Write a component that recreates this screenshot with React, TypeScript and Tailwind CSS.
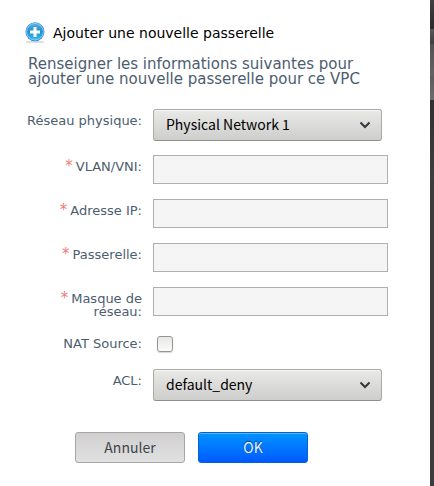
import { useId } from "react";
import type { ReactNode } from "react";

const uiFont = "font-['Noto_Sans_CJK_SC','Noto_Sans',sans-serif]";

function Row({ id, label, required, children }: { id: string; label: string; required?: boolean; children: ReactNode }) {
  return (
    <div className="flex items-start gap-[11px]">
      <label htmlFor={id} className="w-[118px] shrink-0 pt-[5px] text-right text-[13px] leading-[13px] text-[#4c5d70]">
        {required && <span className="mr-[3px] text-[15px] leading-[13px] text-[#ee7b7a]">*</span>}
        {label}
      </label>
      {children}
    </div>
  );
}

function TextRow({ label }: { label: string }) {
  const id = useId();
  return (
    <Row id={id} label={label} required>
      <input id={id} type="text" className="h-[29px] min-w-0 flex-1 border border-[#afafaf] bg-[#f5f5f5] px-2 text-sm" />
    </Row>
  );
}

function SelectRow({ label, options }: { label: string; options: string[] }) {
  const id = useId();
  return (
    <Row id={id} label={label}>
      <div className="relative mr-1.5 flex min-w-0 flex-1">
        <select
          id={id}
          className={`h-8 w-full appearance-none rounded-[3px] border border-[#aaaaa6] border-b-[#8f8e87] bg-linear-to-b from-[#e9e9e8] to-[#cececc] pr-8 pb-0.5 pl-3 text-sm text-black shadow-[inset_0_1px_0_#f6f6f6] ${uiFont}`}
        >
          {options.map((o) => (
            <option key={o}>{o}</option>
          ))}
        </select>
        <svg className="pointer-events-none absolute top-3 right-3 h-2 w-2.5" viewBox="0 0 10 8" fill="none" stroke="#33393c" strokeWidth="2">
          <path d="M0.5 1.5 5 6 9.5 1.5" />
        </svg>
      </div>
    </Row>
  );
}

function AddIcon() {
  return (
    <svg className="h-[22px] w-5 shrink-0" viewBox="0 0 20 22" aria-hidden="true">
      <defs>
        <linearGradient id="disc" x1="0" y1="0" x2="0" y2="1">
          <stop offset="0" stopColor="#58b0e0" />
          <stop offset="0.5" stopColor="#1c8fd2" />
          <stop offset="1" stopColor="#35c3f5" />
        </linearGradient>
        <linearGradient id="rim" x1="0" y1="0" x2="0" y2="1">
          <stop offset="0" stopColor="#3f8ee0" />
          <stop offset="1" stopColor="#1f74c8" />
        </linearGradient>
      </defs>
      <rect x="1" y="19" width="18" height="2" rx="1" fill="#dedede" />
      <circle cx="10" cy="9.8" r="9.5" fill="url(#rim)" />
      <circle cx="10" cy="9.8" r="8.4" fill="url(#disc)" stroke="#a5dcf6" strokeWidth="0.8" />
      <path d="M10 5v10M5 10h10" stroke="#fff" strokeWidth="3" />
    </svg>
  );
}

export default function App() {
  const natId = useId();
  return (
    <div className="flex min-h-screen bg-white font-['DejaVu_Sans',sans-serif]">
      <form className="min-w-0 flex-1 pt-[22px] pb-[23px]" onSubmit={(e) => e.preventDefault()}>
        <header className="flex items-center gap-2 pl-[25px]">
          <AddIcon />
          <h1 className="text-sm leading-5 text-black">Ajouter une nouvelle passerelle</h1>
        </header>
        <p className="mt-[13px] pr-10 pl-7 text-[15px] leading-[15px] text-[#4c5d70]">
          Renseigner les informations suivantes pour ajouter une nouvelle passerelle pour ce VPC
        </p>
        <div className="mt-[22px] pr-[42px] pl-6">
          <SelectRow label="Réseau physique:" options={["Physical Network 1"]} />
          <div className="mt-3.5 flex flex-col gap-[15px]">
            <TextRow label="VLAN/VNI:" />
            <TextRow label="Adresse IP:" />
            <TextRow label="Passerelle:" />
            <TextRow label="Masque de réseau:" />
          </div>
          <div className="mt-3.5 mb-[17px]">
            <Row id={natId} label="NAT Source:">
              <input
                id={natId}
                type="checkbox"
                className="mt-1 ml-1 size-4 appearance-none rounded-[3px] border border-[#96958f] bg-linear-to-b from-[#e8e8e8] to-[#fbfbfb] shadow-[0_1px_1px_#d8d8d8] checked:from-[#0090ff] checked:to-[#0060ff]"
              />
            </Row>
          </div>
          <SelectRow label="ACL:" options={["default_deny"]} />
        </div>
        <div className="mt-[31px] flex gap-[13px] pl-[75px]">
          <button
            type="button"
            className={`h-[31px] w-[110px] rounded-[3px] border border-[#a8a6a6] bg-linear-to-b from-[#d1cfcf] to-[#e1e1e1] pb-0.5 text-sm text-[#40464a] ${uiFont}`}
          >
            Annuler
          </button>
          <button
            type="submit"
            className={`h-[31px] w-[110px] rounded-[3px] border border-[#0065d0] bg-linear-to-b from-[#0093ff] to-[#0058ff] pb-0.5 text-sm text-[#e8f0fa] shadow-[inset_0_1px_0_#5ab4ff] text-shadow-[0_-1px_1px_#0b3f80] ${uiFont}`}
          >
            OK
          </button>
        </div>
      </form>
      <div className="flex w-1 shrink-0 flex-col bg-[#3a3c3f]" aria-hidden="true">
        <div className="h-[29px] bg-linear-to-b from-[#3c3e41] to-[#292b2e]" />
        <div className="h-[15px] bg-linear-to-b from-[#55575a] to-[#3c3e41]" />
        <div className="h-8 bg-linear-to-b from-[#515151] to-[#646464]" />
        <div className="h-6 bg-linear-to-b from-[#5c5c5c] to-[#6c6c6c]" />
        <div className="h-20 bg-linear-to-b from-[#2e3033] to-[#3c3e41]" />
      </div>
    </div>
  );
}
